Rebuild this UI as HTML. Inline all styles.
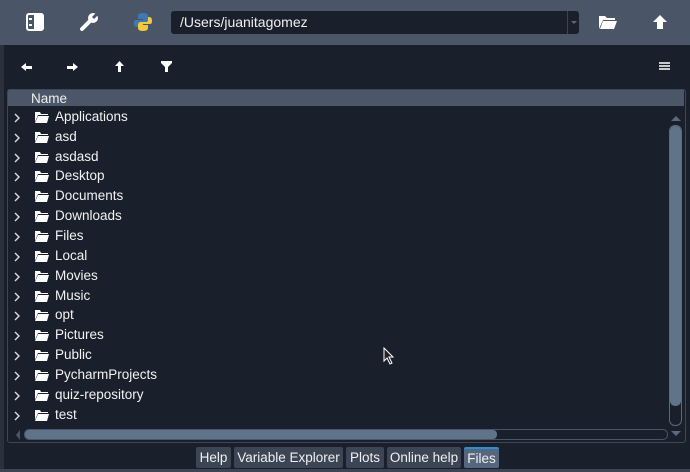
<!DOCTYPE html>
<html><head><style>
*{margin:0;padding:0;box-sizing:border-box}
body{width:690px;height:472px;background:#19202b;font-family:"Liberation Sans",sans-serif;position:relative;overflow:hidden;color:#fff}
.top{position:absolute;left:0;top:0;width:690px;height:45px;background:#4a5568}
.addr{position:absolute;left:171px;top:11px;width:408px;height:23px;background:#19202b;border-radius:3px;font-size:14px;line-height:23px;padding-left:9px;color:#f0f0f0}
.addr .dd{position:absolute;right:0;top:0;width:12px;height:23px;border-left:1px solid #3a4454}
.leftstrip{position:absolute;left:0;top:45px;width:4px;height:427px;background:#2a313c}
.panel{position:absolute;left:7px;top:89px;width:679px;height:354px;border:1px solid #3d4756;border-radius:3px}
.hdr{position:absolute;left:8px;top:90px;width:676px;height:16px;background:#4b5769;font-size:13.5px;line-height:17px;padding-left:23px;color:#f0f0f0}
.row{position:absolute;left:0;height:20px;font-size:13.5px;line-height:20px;color:#f2f2f2}
.row .t{position:absolute;left:55px;white-space:nowrap}
.row svg{position:absolute}
.vs{position:absolute;left:669px;top:125px;width:13px;height:301px;border:1px solid #5a6880;border-radius:6px}
.vt{position:absolute;left:670px;top:126px;width:11px;height:280px;background:#5f7389;border-radius:5px}
.hs{position:absolute;left:24px;top:429px;width:644px;height:11px;border:1px solid #4a5668;border-radius:5px}
.ht{position:absolute;left:25px;top:430px;width:472px;height:9px;background:#5f7389;border-radius:4px}
.tab{position:absolute;top:447px;height:21px;background:#3b4554;border-radius:2px;font-size:13.5px;line-height:21px;text-align:center;color:#f0f0f0;white-space:nowrap}
</style></head><body>
<div class="top"></div>
<svg style="position:absolute;left:26px;top:13px" width="18" height="18" viewBox="0 0 18 18"><rect x="1" y="1" width="16" height="16" rx="2" fill="none" stroke="#fff" stroke-width="2"/><rect x="8" y="1" width="9" height="16" fill="#fff"/><rect x="3" y="5" width="3" height="2" fill="#fff"/><rect x="3" y="11" width="3" height="2" fill="#fff"/></svg>
<svg style="position:absolute;left:79px;top:11px" width="21" height="21" viewBox="0 0 21 21"><path d="M3 18 L11 10" stroke="#fff" stroke-width="4" stroke-linecap="round"/><circle cx="14" cy="7" r="5" fill="#fff"/><path d="M14 7 L19 2" stroke="#4a5568" stroke-width="3"/></svg>
<svg style="position:absolute;left:133px;top:12px" width="20" height="20" viewBox="0 0 20 20"><path d="M10 1 C5 1 5 3 5 5 V7 H10 V8 H3 C1 8 1 10 1 11 C1 14 2 15 4 15 H5 V12 C5 11 6 10 7 10 H12 C14 10 15 9 15 7 V4 C15 2 13 1 10 1Z" fill="#3d7ab5"/><path d="M10 19 C15 19 15 17 15 15 V13 H10 V12 H17 C19 12 19 10 19 9 C19 6 18 5 16 5 H15 V8 C15 9 14 10 13 10 H8 C6 10 5 11 5 13 V16 C5 18 7 19 10 19Z" fill="#f2c93b"/></svg>
<div class="addr">/Users/juanitagomez<div class="dd"><svg width="12" height="23"><path d="M3 10 L9 10 L6 13Z" fill="#667"/></svg></div></div>
<svg style="position:absolute;left:598px;top:15px" width="20" height="15" viewBox="0 0 20 15"><path d="M1 1 H7 L9 3 H17 V5 H5 L1 14Z" fill="#fff"/><path d="M5 6 H19 L16 14 H2Z" fill="#fff"/></svg>
<svg style="position:absolute;left:652px;top:14px" width="16" height="16" viewBox="0 0 16 16"><path d="M8 1 L15 8 H11 V15 H5 V8 H1Z" fill="#fff"/></svg>
<div class="leftstrip"></div>
<svg style="position:absolute;left:21px;top:62px" width="12" height="10"><path d="M0 5 L5 1 V4 H11 V7 H5 V9Z" fill="#fff"/></svg>
<svg style="position:absolute;left:67px;top:62px" width="12" height="10"><path d="M11 5 L6 1 V4 H0 V7 H6 V9Z" fill="#fff"/></svg>
<svg style="position:absolute;left:114px;top:61px" width="11" height="12"><path d="M5.5 0 L10 5 H7 V11 H4 V5 H1Z" fill="#fff"/></svg>
<svg style="position:absolute;left:161px;top:61px" width="11" height="12"><path d="M0 0 H11 V2 L7 6 V11 L4 11 V6 L0 2Z" fill="#fff"/></svg>
<svg style="position:absolute;left:659px;top:62px" width="12" height="10"><path d="M0 1H11M0 4H11M0 7H11" stroke="#fff" stroke-width="1.6"/></svg>
<div class="panel"></div>
<div class="hdr">Name</div>
<div class="row" style="top:107px"><svg style="left:14px;top:6px" width="7" height="10"><path d="M1 1 L5 5 L1 9" stroke="#ddd" stroke-width="1.4" fill="none"/></svg><svg style="left:35px;top:5px" width="14" height="11"><path d="M0 0 H5 L6 2 H13 V3 H3 L0 10Z M3 4 H14 L12 11 H0Z" fill="#fff"/></svg><span class="t">Applications</span></div>
<div class="row" style="top:127px"><svg style="left:14px;top:6px" width="7" height="10"><path d="M1 1 L5 5 L1 9" stroke="#ddd" stroke-width="1.4" fill="none"/></svg><svg style="left:35px;top:5px" width="14" height="11"><path d="M0 0 H5 L6 2 H13 V3 H3 L0 10Z M3 4 H14 L12 11 H0Z" fill="#fff"/></svg><span class="t">asd</span></div>
<div class="row" style="top:147px"><svg style="left:14px;top:6px" width="7" height="10"><path d="M1 1 L5 5 L1 9" stroke="#ddd" stroke-width="1.4" fill="none"/></svg><svg style="left:35px;top:5px" width="14" height="11"><path d="M0 0 H5 L6 2 H13 V3 H3 L0 10Z M3 4 H14 L12 11 H0Z" fill="#fff"/></svg><span class="t">asdasd</span></div>
<div class="row" style="top:166px"><svg style="left:14px;top:6px" width="7" height="10"><path d="M1 1 L5 5 L1 9" stroke="#ddd" stroke-width="1.4" fill="none"/></svg><svg style="left:35px;top:5px" width="14" height="11"><path d="M0 0 H5 L6 2 H13 V3 H3 L0 10Z M3 4 H14 L12 11 H0Z" fill="#fff"/></svg><span class="t">Desktop</span></div>
<div class="row" style="top:186px"><svg style="left:14px;top:6px" width="7" height="10"><path d="M1 1 L5 5 L1 9" stroke="#ddd" stroke-width="1.4" fill="none"/></svg><svg style="left:35px;top:5px" width="14" height="11"><path d="M0 0 H5 L6 2 H13 V3 H3 L0 10Z M3 4 H14 L12 11 H0Z" fill="#fff"/></svg><span class="t">Documents</span></div>
<div class="row" style="top:206px"><svg style="left:14px;top:6px" width="7" height="10"><path d="M1 1 L5 5 L1 9" stroke="#ddd" stroke-width="1.4" fill="none"/></svg><svg style="left:35px;top:5px" width="14" height="11"><path d="M0 0 H5 L6 2 H13 V3 H3 L0 10Z M3 4 H14 L12 11 H0Z" fill="#fff"/></svg><span class="t">Downloads</span></div>
<div class="row" style="top:226px"><svg style="left:14px;top:6px" width="7" height="10"><path d="M1 1 L5 5 L1 9" stroke="#ddd" stroke-width="1.4" fill="none"/></svg><svg style="left:35px;top:5px" width="14" height="11"><path d="M0 0 H5 L6 2 H13 V3 H3 L0 10Z M3 4 H14 L12 11 H0Z" fill="#fff"/></svg><span class="t">Files</span></div>
<div class="row" style="top:246px"><svg style="left:14px;top:6px" width="7" height="10"><path d="M1 1 L5 5 L1 9" stroke="#ddd" stroke-width="1.4" fill="none"/></svg><svg style="left:35px;top:5px" width="14" height="11"><path d="M0 0 H5 L6 2 H13 V3 H3 L0 10Z M3 4 H14 L12 11 H0Z" fill="#fff"/></svg><span class="t">Local</span></div>
<div class="row" style="top:266px"><svg style="left:14px;top:6px" width="7" height="10"><path d="M1 1 L5 5 L1 9" stroke="#ddd" stroke-width="1.4" fill="none"/></svg><svg style="left:35px;top:5px" width="14" height="11"><path d="M0 0 H5 L6 2 H13 V3 H3 L0 10Z M3 4 H14 L12 11 H0Z" fill="#fff"/></svg><span class="t">Movies</span></div>
<div class="row" style="top:286px"><svg style="left:14px;top:6px" width="7" height="10"><path d="M1 1 L5 5 L1 9" stroke="#ddd" stroke-width="1.4" fill="none"/></svg><svg style="left:35px;top:5px" width="14" height="11"><path d="M0 0 H5 L6 2 H13 V3 H3 L0 10Z M3 4 H14 L12 11 H0Z" fill="#fff"/></svg><span class="t">Music</span></div>
<div class="row" style="top:305px"><svg style="left:14px;top:6px" width="7" height="10"><path d="M1 1 L5 5 L1 9" stroke="#ddd" stroke-width="1.4" fill="none"/></svg><svg style="left:35px;top:5px" width="14" height="11"><path d="M0 0 H5 L6 2 H13 V3 H3 L0 10Z M3 4 H14 L12 11 H0Z" fill="#fff"/></svg><span class="t">opt</span></div>
<div class="row" style="top:325px"><svg style="left:14px;top:6px" width="7" height="10"><path d="M1 1 L5 5 L1 9" stroke="#ddd" stroke-width="1.4" fill="none"/></svg><svg style="left:35px;top:5px" width="14" height="11"><path d="M0 0 H5 L6 2 H13 V3 H3 L0 10Z M3 4 H14 L12 11 H0Z" fill="#fff"/></svg><span class="t">Pictures</span></div>
<div class="row" style="top:345px"><svg style="left:14px;top:6px" width="7" height="10"><path d="M1 1 L5 5 L1 9" stroke="#ddd" stroke-width="1.4" fill="none"/></svg><svg style="left:35px;top:5px" width="14" height="11"><path d="M0 0 H5 L6 2 H13 V3 H3 L0 10Z M3 4 H14 L12 11 H0Z" fill="#fff"/></svg><span class="t">Public</span></div>
<div class="row" style="top:365px"><svg style="left:14px;top:6px" width="7" height="10"><path d="M1 1 L5 5 L1 9" stroke="#ddd" stroke-width="1.4" fill="none"/></svg><svg style="left:35px;top:5px" width="14" height="11"><path d="M0 0 H5 L6 2 H13 V3 H3 L0 10Z M3 4 H14 L12 11 H0Z" fill="#fff"/></svg><span class="t">PycharmProjects</span></div>
<div class="row" style="top:385px"><svg style="left:14px;top:6px" width="7" height="10"><path d="M1 1 L5 5 L1 9" stroke="#ddd" stroke-width="1.4" fill="none"/></svg><svg style="left:35px;top:5px" width="14" height="11"><path d="M0 0 H5 L6 2 H13 V3 H3 L0 10Z M3 4 H14 L12 11 H0Z" fill="#fff"/></svg><span class="t">quiz-repository</span></div>
<div class="row" style="top:405px"><svg style="left:14px;top:6px" width="7" height="10"><path d="M1 1 L5 5 L1 9" stroke="#ddd" stroke-width="1.4" fill="none"/></svg><svg style="left:35px;top:5px" width="14" height="11"><path d="M0 0 H5 L6 2 H13 V3 H3 L0 10Z M3 4 H14 L12 11 H0Z" fill="#fff"/></svg><span class="t">test</span></div>
<svg style="position:absolute;left:670px;top:114px" width="12" height="8"><path d="M1 7 L6 2 L11 7Z" fill="#5a6880"/></svg>
<div class="vs"></div><div class="vt"></div>
<svg style="position:absolute;left:670px;top:430px" width="12" height="8"><path d="M1 1 L6 6 L11 1Z" fill="#5a6880"/></svg>
<svg style="position:absolute;left:14px;top:429px" width="8" height="12"><path d="M6 1 L2 6 L6 11Z" fill="#4a5668"/></svg>
<div class="hs"></div><div class="ht"></div>
<div class="tab" style="left:196px;width:35px">Help</div>
<div class="tab" style="left:234px;width:109px">Variable Explorer</div>
<div class="tab" style="left:346px;width:38px">Plots</div>
<div class="tab" style="left:387px;width:74px">Online help</div>
<div class="tab" style="left:464px;width:35px;background:#56677d;border-top:2px solid #2a8fd8;line-height:19px">Files</div>
<div style="position:absolute;left:0;top:469px;width:690px;height:3px;background:#3b4554"></div>
<svg style="position:absolute;left:383px;top:347px" width="12" height="18"><path d="M1 1 V14 L4 11 L7 17 L9 16 L6 10 H10Z" fill="#222" stroke="#fff" stroke-width="1"/></svg>
</body></html>
